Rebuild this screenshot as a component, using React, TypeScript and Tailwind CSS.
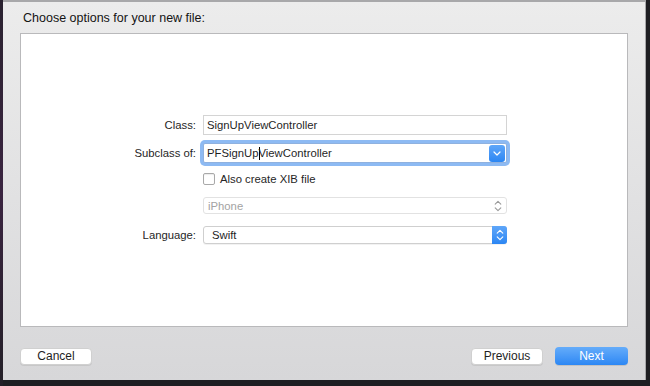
import React from 'react';

function ChevronDown({ className }: { className?: string }) {
  return (
    <svg width="8" height="5" viewBox="0 0 8 5" className={className}>
      <path d="M1 1l3 3 3-3" fill="none" stroke="currentColor" strokeWidth="1.2" strokeLinecap="round" strokeLinejoin="round" />
    </svg>
  );
}

function UpDown({ className }: { className?: string }) {
  return (
    <svg width="8" height="12" viewBox="0 0 8 12" className={className}>
      <path d="M1.2 4.2L4 1.4l2.8 2.8M1.2 7.8L4 10.6l2.8-2.8" fill="none" stroke="currentColor" strokeWidth="1.1" strokeLinecap="round" strokeLinejoin="round" />
    </svg>
  );
}

function Label({ children }: { children: React.ReactNode }) {
  return <div className="w-[175px] shrink-0 text-right text-[#262626]">{children}</div>;
}

export default function App() {
  return (
    <div className="flex h-[386px] w-[650px] bg-[#1e1e22] font-['Liberation_Sans',Arial,sans-serif] text-[11.3px]">
      <div className="w-[3px] shrink-0 bg-gradient-to-b from-[#2a2230] via-[#3a2440] to-[#231f27]" />

      <div className="flex h-[380px] w-[643px] shrink-0 flex-col border-t-2 border-r border-[#a8a8aa] bg-gradient-to-b from-[#ececec] to-[#d7d7d9] pl-[17px] pr-[17px]">
        <div className="flex h-[31px] items-center pl-[3px] pt-px text-[12.5px] text-[#141414]">
          Choose options for your new file:
        </div>

        <div className="flex h-[294px] w-[608px] flex-col border border-[#b9b9bb] bg-white pt-[81px] leading-[14px]">
          {/* Class */}
          <div className="flex items-center gap-[7px]">
            <Label>Class:</Label>
            <div className="flex h-[20px] w-[304px] items-center border border-[#d4d4d4] bg-white pl-[3px] text-[#1f1f1f]">
              SignUpViewController
            </div>
          </div>

          {/* Subclass of */}
          <div className="mt-[8px] flex items-center gap-[7px]">
            <Label>Subclass of:</Label>
            <div className="flex h-[20px] w-[304px] items-center rounded-[2px] border border-[#8fb1df] bg-white pl-[3px] text-[#1f1f1f] shadow-[0_0_0_3px_#8dbaf3]">
              <span>PFSignUp</span>
              <span className="-mr-px inline-block h-[13px] w-px bg-black" />
              <span>ViewController</span>
              <div className="ml-auto mr-px flex h-[17px] w-[16px] items-center justify-center rounded-[3px] bg-gradient-to-b from-[#5ea6f9] to-[#2a86f3] text-white">
                <ChevronDown />
              </div>
            </div>
          </div>

          {/* Checkbox */}
          <div className="mt-[10px] flex h-[12px] items-center gap-[7px]">
            <div className="w-[175px] shrink-0" />
            <div className="flex items-center gap-[5px] text-[#262626]">
              <div className="h-[12px] w-[12px] rounded-[2px] border border-[#a9a9a9] bg-white shadow-[inset_0_1px_1px_rgba(0,0,0,0.08)]" />
              <span>Also create XIB file</span>
            </div>
          </div>

          {/* Device */}
          <div className="mt-[12px] flex items-center gap-[7px]">
            <div className="w-[175px] shrink-0" />
            <div className="flex h-[17px] w-[304px] items-center rounded-[3px] border border-[#e2e2e2] bg-white pl-[4px] pr-[4px] text-[#a3a3a3]">
              iPhone
              <UpDown className="ml-auto text-[#9a9a9a]" />
            </div>
          </div>

          {/* Language */}
          <div className="mt-[12px] flex items-center gap-[7px]">
            <Label>Language:</Label>
            <div className="flex h-[18px] w-[304px] items-center rounded-[3px] border border-[#cfcfcf] bg-white pl-[8px] text-[#1f1f1f] shadow-[0_1px_0_rgba(0,0,0,0.05)]">
              Swift
              <div className="-mr-px ml-auto flex h-[18px] w-[15px] items-center justify-center rounded-r-[3px] bg-gradient-to-b from-[#5ea6f9] to-[#2a86f3] text-white">
                <UpDown />
              </div>
            </div>
          </div>
        </div>

        <div className="mt-[20px] flex items-center text-[12px]">
          <button className="flex h-[17px] w-[72px] items-center justify-center rounded-[4px] border border-[#d0d0d0] bg-white text-[#1f1f1f] shadow-[0_1px_0_rgba(0,0,0,0.08)]">
            Cancel
          </button>
          <button className="ml-auto flex h-[17px] w-[72px] items-center justify-center rounded-[4px] border border-[#d0d0d0] bg-white text-[#1f1f1f] shadow-[0_1px_0_rgba(0,0,0,0.08)]">
            Previous
          </button>
          <button className="ml-[12px] flex h-[18px] w-[73px] items-center justify-center rounded-[4px] bg-gradient-to-b from-[#64acfa] to-[#2b87f4] text-white shadow-[0_1px_0_rgba(0,0,0,0.1)]">
            Next
          </button>
        </div>
      </div>

      <div className="w-[4px] shrink-0 bg-[#1e1e22]" />
    </div>
  );
}
